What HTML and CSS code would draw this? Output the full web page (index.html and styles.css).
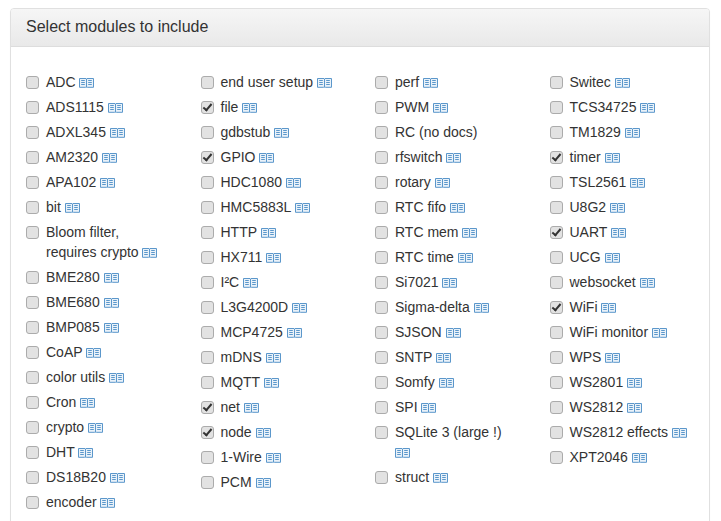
FILE: index.html
```html
<!DOCTYPE html>
<html lang="en">
<head>
<meta charset="utf-8">
<title>Select modules</title>
<link rel="stylesheet" href="styles.css">
</head>
<body>
<svg class="defs" width="0" height="0" aria-hidden="true">
<symbol id="book" viewBox="0 0 15 10">
<path d="M.5.5h6.500l.5.500.5-.500h6.500v8.800H8.300l-.8.500-.8-.500H.5z" fill="#eaf2f9" stroke="#5b97cb" stroke-width="1"/>
<path d="M7.500 1v8M2.200 2.500h3.600M2.200 4.500h3.600M2.200 6.500h3.600M9.200 2.500h3.600M9.200 4.500h3.600M9.200 6.500h3.600" fill="none" stroke="#5b97cb" stroke-width="1"/>
</symbol>
</svg>
<section class="panel">
<h1 class="panel-title">Select modules to include</h1>
<div class="panel-body">
<div class="col">
<label class="mod"><input type="checkbox"><span>ADC <svg class="book"><use href="#book"/></svg></span></label>
<label class="mod"><input type="checkbox"><span>ADS1115 <svg class="book"><use href="#book"/></svg></span></label>
<label class="mod"><input type="checkbox"><span>ADXL345 <svg class="book"><use href="#book"/></svg></span></label>
<label class="mod"><input type="checkbox"><span>AM2320 <svg class="book"><use href="#book"/></svg></span></label>
<label class="mod"><input type="checkbox"><span>APA102 <svg class="book"><use href="#book"/></svg></span></label>
<label class="mod"><input type="checkbox"><span>bit <svg class="book"><use href="#book"/></svg></span></label>
<label class="mod"><input type="checkbox"><span>Bloom filter, requires crypto <svg class="book"><use href="#book"/></svg></span></label>
<label class="mod"><input type="checkbox"><span>BME280 <svg class="book"><use href="#book"/></svg></span></label>
<label class="mod"><input type="checkbox"><span>BME680 <svg class="book"><use href="#book"/></svg></span></label>
<label class="mod"><input type="checkbox"><span>BMP085 <svg class="book"><use href="#book"/></svg></span></label>
<label class="mod"><input type="checkbox"><span>CoAP <svg class="book"><use href="#book"/></svg></span></label>
<label class="mod"><input type="checkbox"><span>color utils <svg class="book"><use href="#book"/></svg></span></label>
<label class="mod"><input type="checkbox"><span>Cron <svg class="book"><use href="#book"/></svg></span></label>
<label class="mod"><input type="checkbox"><span>crypto <svg class="book"><use href="#book"/></svg></span></label>
<label class="mod"><input type="checkbox"><span>DHT <svg class="book"><use href="#book"/></svg></span></label>
<label class="mod"><input type="checkbox"><span>DS18B20 <svg class="book"><use href="#book"/></svg></span></label>
<label class="mod"><input type="checkbox"><span>encoder <svg class="book"><use href="#book"/></svg></span></label>
</div>
<div class="col">
<label class="mod"><input type="checkbox"><span>end user setup <svg class="book"><use href="#book"/></svg></span></label>
<label class="mod"><input type="checkbox" checked><span>file <svg class="book"><use href="#book"/></svg></span></label>
<label class="mod"><input type="checkbox"><span>gdbstub <svg class="book"><use href="#book"/></svg></span></label>
<label class="mod"><input type="checkbox" checked><span>GPIO <svg class="book"><use href="#book"/></svg></span></label>
<label class="mod"><input type="checkbox"><span>HDC1080 <svg class="book"><use href="#book"/></svg></span></label>
<label class="mod"><input type="checkbox"><span>HMC5883L <svg class="book"><use href="#book"/></svg></span></label>
<label class="mod"><input type="checkbox"><span>HTTP <svg class="book"><use href="#book"/></svg></span></label>
<label class="mod"><input type="checkbox"><span>HX711 <svg class="book"><use href="#book"/></svg></span></label>
<label class="mod"><input type="checkbox"><span>I²C <svg class="book"><use href="#book"/></svg></span></label>
<label class="mod"><input type="checkbox"><span>L3G4200D <svg class="book"><use href="#book"/></svg></span></label>
<label class="mod"><input type="checkbox"><span>MCP4725 <svg class="book"><use href="#book"/></svg></span></label>
<label class="mod"><input type="checkbox"><span>mDNS <svg class="book"><use href="#book"/></svg></span></label>
<label class="mod"><input type="checkbox"><span>MQTT <svg class="book"><use href="#book"/></svg></span></label>
<label class="mod"><input type="checkbox" checked><span>net <svg class="book"><use href="#book"/></svg></span></label>
<label class="mod"><input type="checkbox" checked><span>node <svg class="book"><use href="#book"/></svg></span></label>
<label class="mod"><input type="checkbox"><span>1-Wire <svg class="book"><use href="#book"/></svg></span></label>
<label class="mod"><input type="checkbox"><span>PCM <svg class="book"><use href="#book"/></svg></span></label>
</div>
<div class="col">
<label class="mod"><input type="checkbox"><span>perf <svg class="book"><use href="#book"/></svg></span></label>
<label class="mod"><input type="checkbox"><span>PWM <svg class="book"><use href="#book"/></svg></span></label>
<label class="mod"><input type="checkbox"><span>RC (no docs)</span></label>
<label class="mod"><input type="checkbox"><span>rfswitch <svg class="book"><use href="#book"/></svg></span></label>
<label class="mod"><input type="checkbox"><span>rotary <svg class="book"><use href="#book"/></svg></span></label>
<label class="mod"><input type="checkbox"><span>RTC fifo <svg class="book"><use href="#book"/></svg></span></label>
<label class="mod"><input type="checkbox"><span>RTC mem <svg class="book"><use href="#book"/></svg></span></label>
<label class="mod"><input type="checkbox"><span>RTC time <svg class="book"><use href="#book"/></svg></span></label>
<label class="mod"><input type="checkbox"><span>Si7021 <svg class="book"><use href="#book"/></svg></span></label>
<label class="mod"><input type="checkbox"><span>Sigma-delta <svg class="book"><use href="#book"/></svg></span></label>
<label class="mod"><input type="checkbox"><span>SJSON <svg class="book"><use href="#book"/></svg></span></label>
<label class="mod"><input type="checkbox"><span>SNTP <svg class="book"><use href="#book"/></svg></span></label>
<label class="mod"><input type="checkbox"><span>Somfy <svg class="book"><use href="#book"/></svg></span></label>
<label class="mod"><input type="checkbox"><span>SPI <svg class="book"><use href="#book"/></svg></span></label>
<label class="mod"><input type="checkbox"><span>SQLite 3 (large !) <svg class="book"><use href="#book"/></svg></span></label>
<label class="mod"><input type="checkbox"><span>struct <svg class="book"><use href="#book"/></svg></span></label>
</div>
<div class="col">
<label class="mod"><input type="checkbox"><span>Switec <svg class="book"><use href="#book"/></svg></span></label>
<label class="mod"><input type="checkbox"><span>TCS34725 <svg class="book"><use href="#book"/></svg></span></label>
<label class="mod"><input type="checkbox"><span>TM1829 <svg class="book"><use href="#book"/></svg></span></label>
<label class="mod"><input type="checkbox" checked><span>timer <svg class="book"><use href="#book"/></svg></span></label>
<label class="mod"><input type="checkbox"><span>TSL2561 <svg class="book"><use href="#book"/></svg></span></label>
<label class="mod"><input type="checkbox"><span>U8G2 <svg class="book"><use href="#book"/></svg></span></label>
<label class="mod"><input type="checkbox" checked><span>UART <svg class="book"><use href="#book"/></svg></span></label>
<label class="mod"><input type="checkbox"><span>UCG <svg class="book"><use href="#book"/></svg></span></label>
<label class="mod"><input type="checkbox"><span>websocket <svg class="book"><use href="#book"/></svg></span></label>
<label class="mod"><input type="checkbox" checked><span>WiFi <svg class="book"><use href="#book"/></svg></span></label>
<label class="mod"><input type="checkbox"><span>WiFi monitor <svg class="book"><use href="#book"/></svg></span></label>
<label class="mod"><input type="checkbox"><span>WPS <svg class="book"><use href="#book"/></svg></span></label>
<label class="mod"><input type="checkbox"><span>WS2801 <svg class="book"><use href="#book"/></svg></span></label>
<label class="mod"><input type="checkbox"><span>WS2812 <svg class="book"><use href="#book"/></svg></span></label>
<label class="mod"><input type="checkbox"><span>WS2812 effects <svg class="book"><use href="#book"/></svg></span></label>
<label class="mod"><input type="checkbox"><span>XPT2046 <svg class="book"><use href="#book"/></svg></span></label>
</div>
</div>
</section>
</body>
</html>
```

FILE: styles.css
```css
html, body {
  margin: 0;
  height: 100%;
  overflow: hidden;
  background: #fff;
}
body {
  padding: 8px 11px 0 10px;
  box-sizing: border-box;
  font-family: "Liberation Sans", Arial, sans-serif;
  font-size: 14px;
  line-height: 20px;
  color: #333;
}
.defs {
  position: absolute;
}
.panel {
  border: 1px solid #e0e0e0;
  border-radius: 4px;
  background: #fff;
  box-shadow: 0 1px 1px rgba(0, 0, 0, .05);
}
.panel-title {
  margin: 0;
  padding: 8px 15px 9px;
  font-size: 16px;
  font-weight: 400;
  line-height: 20px;
  color: #333;
  background: linear-gradient(to bottom, #f6f6f6, #e9e9e9);
  border-bottom: 1px solid #ddd;
  border-radius: 3px 3px 0 0;
}
.panel-body {
  display: grid;
  grid-template-columns: repeat(4, 174.500px);
  padding: 25px 15px 15px;
}
.col {
  display: flex;
  flex-direction: column;
  gap: 5px;
  padding-right: 34px;
}
.mod {
  display: flex;
  align-items: flex-start;
  gap: 7px;
}
.mod input {
  appearance: none;
  position: relative;
  flex: none;
  width: 13px;
  height: 13px;
  margin: 4px 0 0;
  background: #e2e2e2;
  border: 1px solid #ababab;
  border-radius: 3px;
}
.mod input:checked::after {
  content: "";
  position: absolute;
  left: 3px;
  top: 0;
  width: 3px;
  height: 7px;
  border: solid #333;
  border-width: 0 2px 2px 0;
  transform: rotate(40deg);
}
.book {
  width: 15px;
  height: 10px;
  vertical-align: -0.5px;
}
```
